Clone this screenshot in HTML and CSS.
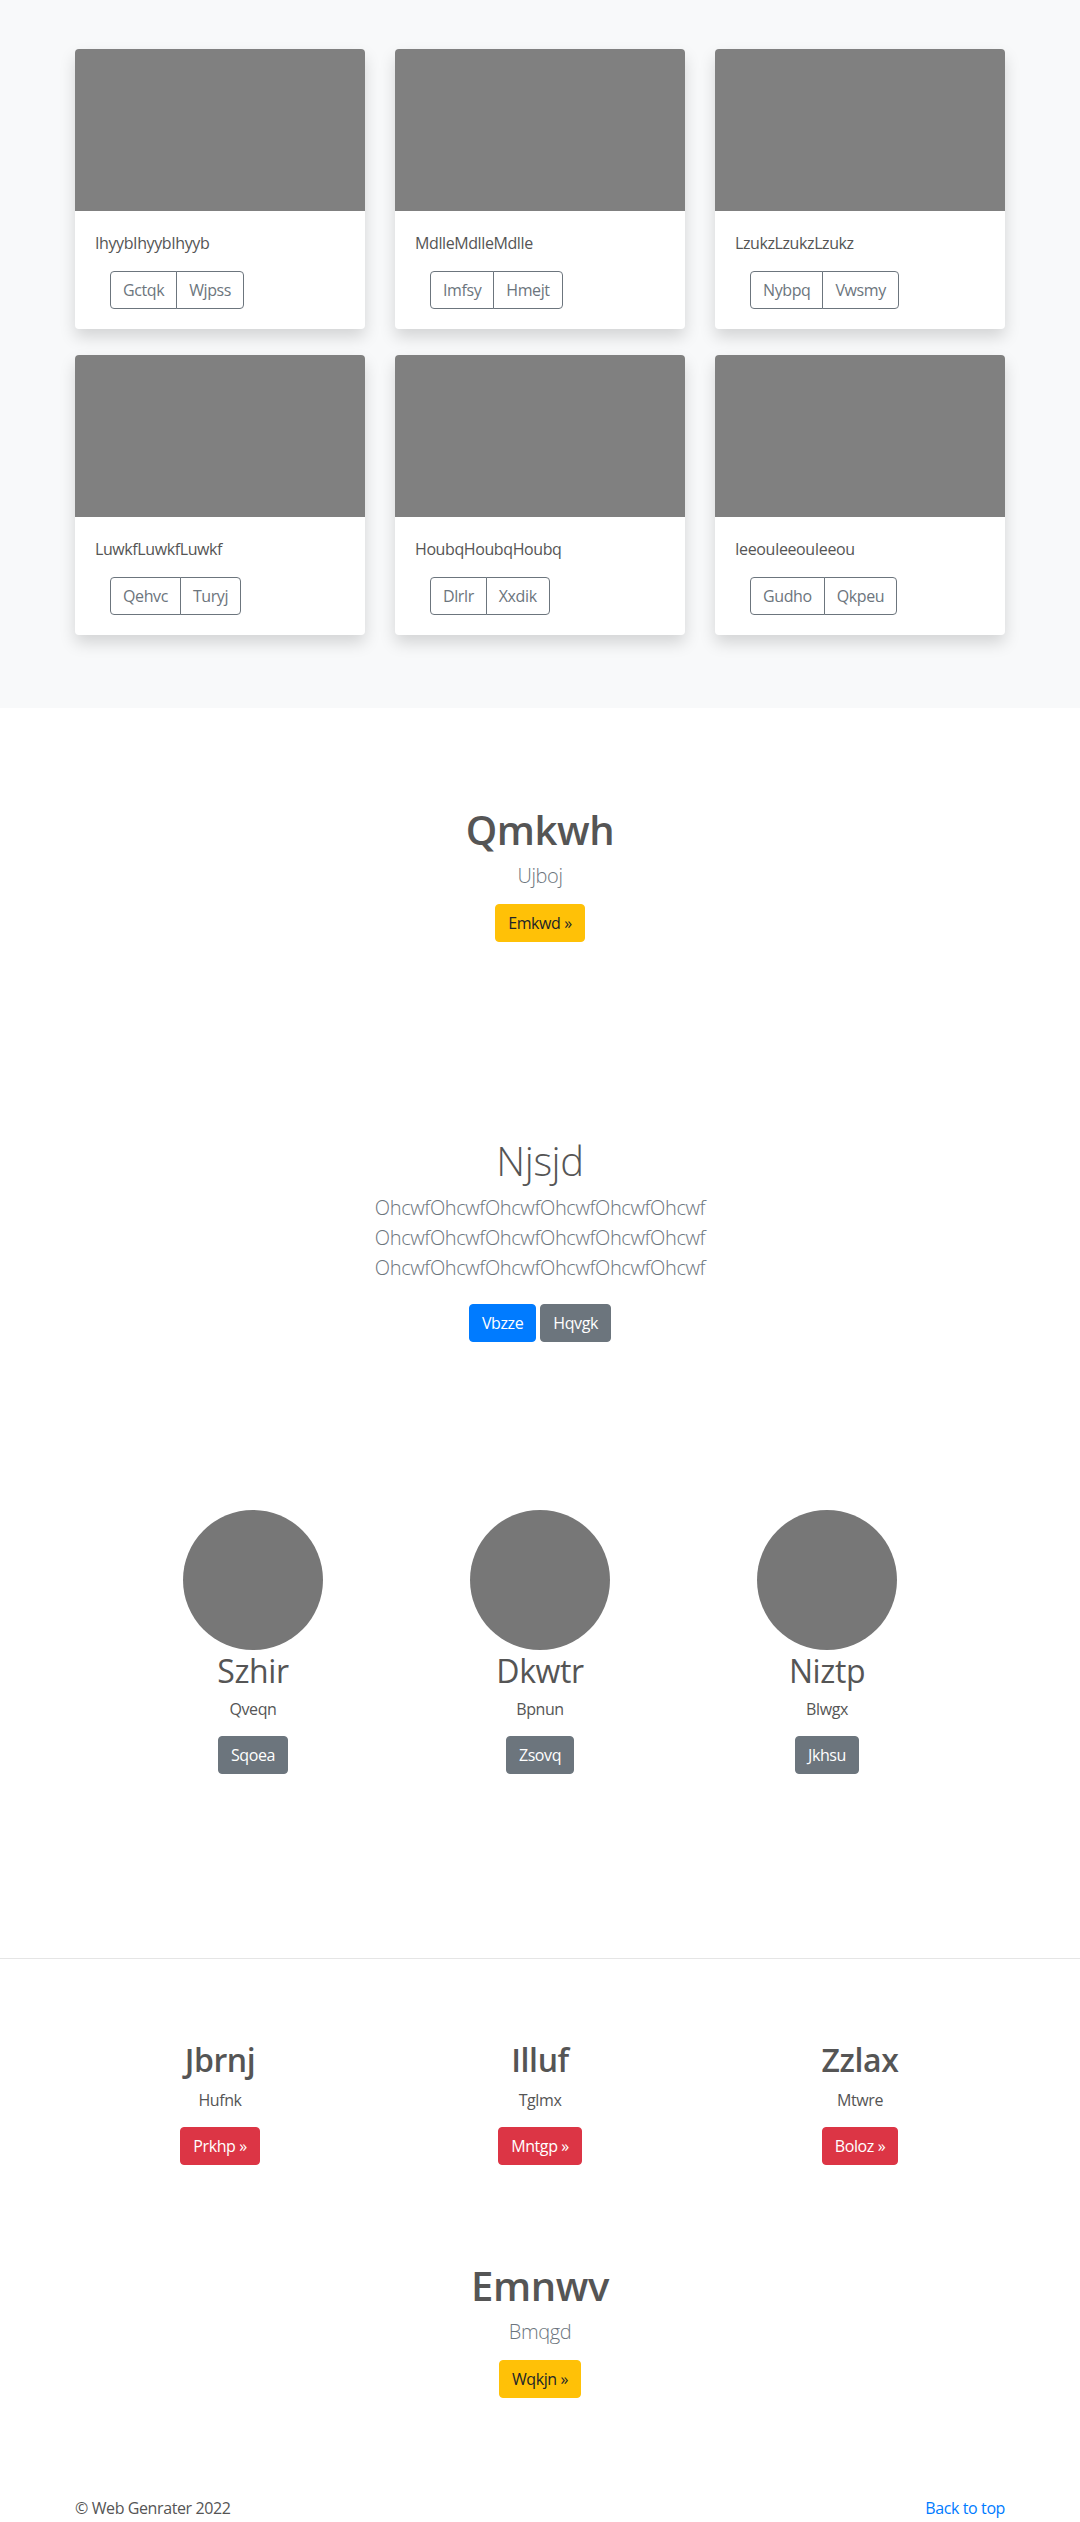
FILE: index.html
```html
<!DOCTYPE html>
<html lang="en">
<head>
<meta charset="utf-8">
<title>Web Genrater</title>
<link rel="stylesheet" href="styles.css">
</head>
<body>
<section class="album">
  <div class="container card-grid">
    <div class="card">
      <div class="card-img"></div>
      <div class="card-body">
        <p class="card-text">IhyybIhyybIhyyb</p>
        <div class="btn-group"><button class="btn btn-outline">Gctqk</button><button class="btn btn-outline">Wjpss</button></div>
      </div>
    </div>
    <div class="card">
      <div class="card-img"></div>
      <div class="card-body">
        <p class="card-text">MdlleMdlleMdlle</p>
        <div class="btn-group"><button class="btn btn-outline">Imfsy</button><button class="btn btn-outline">Hmejt</button></div>
      </div>
    </div>
    <div class="card">
      <div class="card-img"></div>
      <div class="card-body">
        <p class="card-text">LzukzLzukzLzukz</p>
        <div class="btn-group"><button class="btn btn-outline">Nybpq</button><button class="btn btn-outline">Vwsmy</button></div>
      </div>
    </div>
    <div class="card">
      <div class="card-img"></div>
      <div class="card-body">
        <p class="card-text">LuwkfLuwkfLuwkf</p>
        <div class="btn-group"><button class="btn btn-outline">Qehvc</button><button class="btn btn-outline">Turyj</button></div>
      </div>
    </div>
    <div class="card">
      <div class="card-img"></div>
      <div class="card-body">
        <p class="card-text">HoubqHoubqHoubq</p>
        <div class="btn-group"><button class="btn btn-outline">Dlrlr</button><button class="btn btn-outline">Xxdik</button></div>
      </div>
    </div>
    <div class="card">
      <div class="card-img"></div>
      <div class="card-body">
        <p class="card-text">IeeouIeeouIeeou</p>
        <div class="btn-group"><button class="btn btn-outline">Gudho</button><button class="btn btn-outline">Qkpeu</button></div>
      </div>
    </div>
  </div>
</section>

<section class="hero hero-one">
  <h1 class="hero-title bold">Qmkwh</h1>
  <p class="lead">Ujboj</p>
  <a class="btn btn-warning" href="#">Emkwd &raquo;</a>
</section>

<section class="hero hero-two">
  <h1 class="hero-title light">Njsjd</h1>
  <p class="lead narrow">OhcwfOhcwfOhcwfOhcwfOhcwfOhcwf OhcwfOhcwfOhcwfOhcwfOhcwfOhcwf OhcwfOhcwfOhcwfOhcwfOhcwfOhcwf</p>
  <div class="btn-row">
    <a class="btn btn-primary" href="#">Vbzze</a>
    <a class="btn btn-secondary" href="#">Hqvgk</a>
  </div>
</section>

<section class="marketing">
  <div class="person">
    <div class="avatar"></div>
    <h2 class="person-name">Szhir</h2>
    <p class="person-sub">Qveqn</p>
    <a class="btn btn-secondary" href="#">Sqoea</a>
  </div>
  <div class="person">
    <div class="avatar"></div>
    <h2 class="person-name">Dkwtr</h2>
    <p class="person-sub">Bpnun</p>
    <a class="btn btn-secondary" href="#">Zsovq</a>
  </div>
  <div class="person">
    <div class="avatar"></div>
    <h2 class="person-name">Niztp</h2>
    <p class="person-sub">Blwgx</p>
    <a class="btn btn-secondary" href="#">Jkhsu</a>
  </div>
</section>

<hr class="divider">

<section class="features">
  <div class="feature">
    <h2 class="feature-title">Jbrnj</h2>
    <p class="feature-sub">Hufnk</p>
    <a class="btn btn-danger" href="#">Prkhp &raquo;</a>
  </div>
  <div class="feature">
    <h2 class="feature-title">Illuf</h2>
    <p class="feature-sub">Tglmx</p>
    <a class="btn btn-danger" href="#">Mntgp &raquo;</a>
  </div>
  <div class="feature">
    <h2 class="feature-title">Zzlax</h2>
    <p class="feature-sub">Mtwre</p>
    <a class="btn btn-danger" href="#">Boloz &raquo;</a>
  </div>
</section>

<section class="hero hero-three">
  <h1 class="hero-title bold">Emnwv</h1>
  <p class="lead">Bmqgd</p>
  <a class="btn btn-warning" href="#">Wqkjn &raquo;</a>
</section>

<footer class="footer">
  <div class="container footer-row">
    <p class="copy">&copy; Web Genrater 2022</p>
    <a class="back-top" href="#">Back to top</a>
  </div>
</footer>
</body>
</html>
```
FILE: styles.css
```css
* { box-sizing: border-box; }

html, body {
  margin: 0;
  padding: 0;
}

body {
  font-family: "Segoe UI", "Open Sans", "Noto Sans", sans-serif;
  font-size: 16px;
  line-height: 1.5;
  letter-spacing: -0.025em;
  color: #555555;
  background: #ffffff;
}

p { margin: 0; }
h1, h2 { margin: 0; }

.container {
  width: 930px;
  margin: 0 auto;
}

/* ---------- album ---------- */
.album {
  background: #f8f9fa;
  padding: 49px 0 73px;
}

.card-grid {
  display: grid;
  grid-template-columns: repeat(3, 1fr);
  column-gap: 30px;
  row-gap: 26px;
}

.card {
  background: #ffffff;
  border-radius: 4px;
  box-shadow: 0 8px 16px rgba(0, 0, 0, 0.15);
  overflow: hidden;
  height: 280px;
}

.card-img {
  height: 162px;
  background: #808080;
}

.card-body {
  padding: 20px;
}

.card-text {
  margin-bottom: 16px;
  color: #555555;
}

.btn-group {
  display: inline-flex;
  margin-left: 15px;
}

/* ---------- buttons ---------- */
.btn {
  display: inline-block;
  font-family: inherit;
  font-size: 16px;
  line-height: 24px;
  letter-spacing: inherit;
  padding: 6px 12px;
  border: 1px solid transparent;
  border-radius: 4px;
  text-decoration: none;
  cursor: pointer;
  background: transparent;
}

.btn-outline {
  color: #6c757d;
  border-color: #6c757d;
  background: #ffffff;
}

.btn-group .btn-outline:first-child {
  border-top-right-radius: 0;
  border-bottom-right-radius: 0;
}

.btn-group .btn-outline:last-child {
  margin-left: -1px;
  border-top-left-radius: 0;
  border-bottom-left-radius: 0;
}

.btn-warning {
  color: #212529;
  background: #ffc107;
  border-color: #ffc107;
}

.btn-primary {
  color: #ffffff;
  background: #007bff;
  border-color: #007bff;
}

.btn-secondary {
  color: #ffffff;
  background: #6c757d;
  border-color: #6c757d;
}

.btn-danger {
  color: #ffffff;
  background: #dc3545;
  border-color: #dc3545;
}

/* ---------- hero ---------- */
.hero {
  text-align: center;
}

.hero-one { padding: 98px 0 95px; }
.hero-two { padding: 100px 0 0; }
.hero-three { padding: 97px 0 0; }

.hero-title {
  font-size: 40px;
  line-height: 48px;
  color: #555555;
  margin-bottom: 7px;
}

.hero-title.bold { font-weight: 600; }
.hero-title.light { font-weight: 300; margin-bottom: 8px; }

.lead {
  font-size: 20px;
  line-height: 30px;
  font-weight: 300;
  color: #6c757d;
  margin-top: 2px;
  margin-bottom: 13px;
}

.lead.narrow {
  max-width: 480px;
  margin: 0 auto 21px;
}

.btn-row {
  display: flex;
  justify-content: center;
  gap: 4px;
}

/* ---------- marketing ---------- */
.marketing {
  width: 861px;
  margin: 0 auto;
  padding-top: 168px;
  display: grid;
  grid-template-columns: repeat(3, 1fr);
  text-align: center;
}

.avatar {
  width: 140px;
  height: 140px;
  border-radius: 50%;
  background: #777777;
  margin: 0 auto;
}

.person-name {
  font-size: 32px;
  line-height: 38.4px;
  font-weight: 400;
  color: #555555;
  margin-top: 2px;
  margin-bottom: 7px;
}

.person-sub {
  font-size: 16px;
  margin-bottom: 15px;
}

/* ---------- divider ---------- */
.divider {
  border: 0;
  border-top: 1px solid #e5e5e5;
  margin: 184px 0 0;
}

/* ---------- features ---------- */
.features {
  width: 960px;
  margin: 0 auto;
  padding-top: 82px;
  display: grid;
  grid-template-columns: repeat(3, 1fr);
  text-align: center;
}

.feature-title {
  font-size: 32px;
  line-height: 38.4px;
  font-weight: 600;
  color: #555555;
  margin-bottom: 8px;
}

.feature-sub {
  margin-bottom: 15px;
}

/* ---------- footer ---------- */
.footer {
  padding: 98px 0 48px;
}

.footer-row {
  display: flex;
  justify-content: space-between;
  align-items: center;
}

.copy { color: #555555; }

.back-top {
  color: #007bff;
  text-decoration: none;
}
```
